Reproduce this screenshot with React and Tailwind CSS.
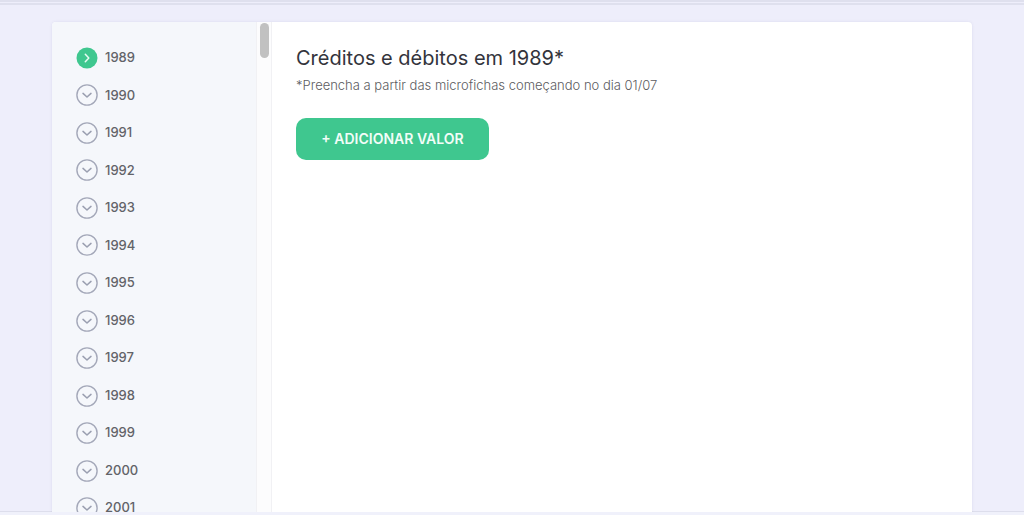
import React, { useState } from 'react'

const years = [1989, 1990, 1991, 1992, 1993, 1994, 1995, 1996, 1997, 1998, 1999, 2000, 2001]

function YearIcon({ active }) {
  if (active) {
    return (
      <svg className="size-[22px] shrink-0" viewBox="0 0 22 22" fill="none" aria-hidden="true">
        <circle cx="11" cy="11" r="10.5" fill="#3fc78f" />
        <path d="M9.3 7.3 12.8 11 9.3 14.7" stroke="#e8fbf3" strokeWidth="1.5" strokeLinecap="round" strokeLinejoin="round" />
      </svg>
    )
  }
  return (
    <svg className="size-[22px] shrink-0" viewBox="0 0 22 22" fill="none" aria-hidden="true">
      <circle cx="11" cy="11" r="10.1" stroke="#a4a8b9" strokeWidth="1.4" />
      <path d="M7 9.4 11 13 15 9.4" stroke="#9a9fb0" strokeWidth="1.5" strokeLinecap="round" strokeLinejoin="round" />
    </svg>
  )
}

function YearList({ selected, onSelect }) {
  return (
    <nav className="flex-1 overflow-hidden bg-[#f5f7fb] pt-[17px]" aria-label="Anos">
      <ul className="grid h-[488px] auto-rows-fr">
        {years.map((year) => (
          <li key={year} className="flex">
            <button
              type="button"
              onClick={() => onSelect(year)}
              className="flex w-full items-center gap-[7px] pl-6 text-[13px] font-medium text-[#626368]"
            >
              <YearIcon active={year === selected} />
              <span>{year}</span>
            </button>
          </li>
        ))}
      </ul>
    </nav>
  )
}

function App() {
  const [selected, setSelected] = useState(1989)

  return (
    <div className="flex h-screen flex-col overflow-hidden bg-[#eeeefb] font-['Inter',sans-serif]">
      <div className="h-[5px] shrink-0 border-y-2 border-[#dfe0ee]" />

      <main className="flex min-h-0 flex-1 border-b border-[#dddeec] px-[52px] pt-[17px]">
        <div className="-mb-px flex flex-1 overflow-hidden rounded-t-[4px] bg-white shadow-[0_0_3px_rgba(90,90,140,0.12)]">
          <aside className="flex w-[220px] shrink-0">
            <YearList selected={selected} onSelect={setSelected} />
            {/* Scroll track */}
            <div className="flex w-4 justify-center border-x border-[#f1f1f4] bg-[#fcfcfd] pt-px">
              <div className="h-[35px] w-[9px] rounded-full bg-[#c1c1c1]" />
            </div>
          </aside>

          <section className="flex-1 px-6 pt-[22px]">
            <h1 className="text-[20px] leading-[28px] text-[#33343c]">
              Créditos e débitos em {selected}*
            </h1>
            <p className="text-[13px] leading-[26px] font-light text-[#5c5c61]">
              *Preencha a partir das microfichas começando no dia 01/07
            </p>
            <button
              type="button"
              className="mt-5 h-[42px] w-[193px] rounded-[10px] bg-[#3fc78f] pb-px text-[14px] font-semibold text-[#f2fdf8]"
            >
              + ADICIONAR VALOR
            </button>
          </section>
        </div>
      </main>

      <div className="h-[3px] shrink-0 bg-[#f0f1fb]" />
    </div>
  )
}

export default App
